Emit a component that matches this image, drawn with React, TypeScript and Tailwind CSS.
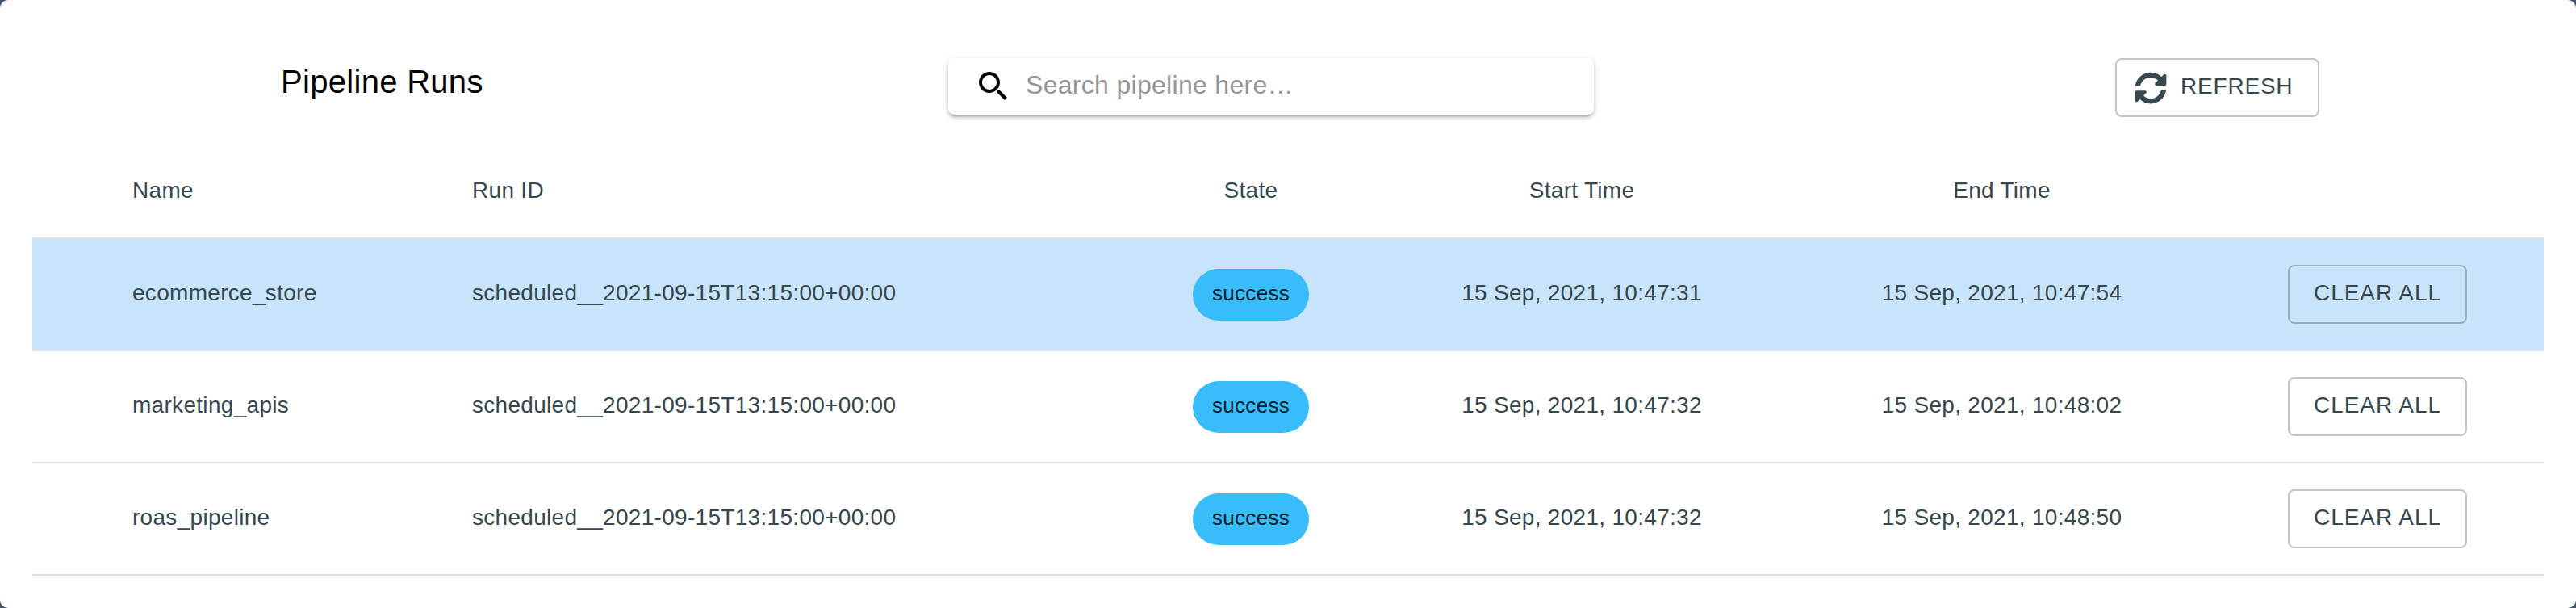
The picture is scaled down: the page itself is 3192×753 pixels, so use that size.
import { FaSyncAlt } from "react-icons/fa";

const runs = [
  {
    name: "ecommerce_store",
    runId: "scheduled__2021-09-15T13:15:00+00:00",
    state: "success",
    start: "15 Sep, 2021, 10:47:31",
    end: "15 Sep, 2021, 10:47:54",
    selected: true,
  },
  {
    name: "marketing_apis",
    runId: "scheduled__2021-09-15T13:15:00+00:00",
    state: "success",
    start: "15 Sep, 2021, 10:47:32",
    end: "15 Sep, 2021, 10:48:02",
    selected: false,
  },
  {
    name: "roas_pipeline",
    runId: "scheduled__2021-09-15T13:15:00+00:00",
    state: "success",
    start: "15 Sep, 2021, 10:47:32",
    end: "15 Sep, 2021, 10:48:50",
    selected: false,
  },
];

const columns =
  "grid grid-cols-[421px_911px_356px_464px_577px_383px] items-center border-b-2 border-[#e0e0e0] text-[28px] tracking-[0.3px]";

const SearchBar = () => (
  <div className="flex h-[70px] w-[800px] items-center rounded-lg bg-white pl-8 shadow-[0_6px_2px_-4px_rgba(0,0,0,0.2),0_4px_4px_0_rgba(0,0,0,0.14),0_2px_10px_0_rgba(0,0,0,0.12)]">
    <svg viewBox="0 0 24 24" className="size-12 fill-black">
      <path d="M15.5 14h-.79l-.28-.27C15.41 12.59 16 11.11 16 9.5 16 5.91 13.09 3 9.5 3S3 5.91 3 9.5 5.91 16 9.5 16c1.61 0 3.09-.59 4.23-1.57l.27.28v.79l5 4.99L20.49 19l-4.99-5zm-6 0C7.01 14 5 11.99 5 9.5S7.01 5 9.5 5 14 7.01 14 9.5 11.99 14 9.5 14z" />
    </svg>
    <span className="ml-4 pb-1 text-[32px] tracking-[0.3px] text-[#959595]">
      Search pipeline here…
    </span>
  </div>
);

const App = () => {
  return (
    <div className="h-[753px] w-[3192px] bg-[#46566c] font-['Liberation_Sans',sans-serif] text-[#37474f]">
      <div className="h-full rounded-[10px] bg-white px-10 pt-[72px]">
        <div className="flex h-[73px] items-start">
          <h1 className="w-[1135px] pt-[5px] pl-[308px] text-[40px] leading-[48px] tracking-[0.3px] text-black">
            Pipeline Runs
          </h1>
          <SearchBar />
          <button className="ml-[646px] flex h-[73px] w-[253px] items-center rounded-lg border-2 border-black/23 pl-[22px] text-[28px] tracking-[0.8px]">
            <FaSyncAlt className="size-10" />
            <span className="ml-[17px] pb-1">REFRESH</span>
          </button>
        </div>

        <div className={`${columns} mt-[33px] h-[118px]`}>
          <span className="pl-[124px]">Name</span>
          <span className="pl-[124px]">Run ID</span>
          <span className="text-center">State</span>
          <span className="text-center">Start Time</span>
          <span className="text-center">End Time</span>
        </div>

        {runs.map((run) => (
          <div
            key={run.name}
            className={`${columns} h-[139px] ${run.selected ? "bg-[#c8e4fa]" : "bg-white"}`}
          >
            <span className="pb-1 pl-[124px]">{run.name}</span>
            <span className="pb-1 pl-[124px]">{run.runId}</span>
            <span className="mt-px flex h-16 w-36 items-center justify-center justify-self-center rounded-full bg-[#39bdfa] pb-1 text-[26px] text-black/87">
              {run.state}
            </span>
            <span className="pb-1 text-center">{run.start}</span>
            <span className="pb-1 text-center">{run.end}</span>
            <button className="ml-[66px] flex h-[73px] w-[222px] items-center justify-center rounded-lg border-2 border-black/23 pb-1 tracking-[0.95px]">
              CLEAR ALL
            </button>
          </div>
        ))}
      </div>
    </div>
  );
};

export default App;
